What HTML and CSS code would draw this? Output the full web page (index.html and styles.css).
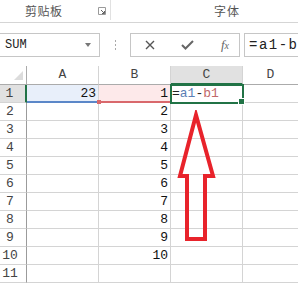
FILE: index.html
```html
<!DOCTYPE html>
<html lang="zh-CN">
<head>
    <meta charset="UTF-8">
    <title>Excel</title>
    <link rel="stylesheet" href="styles.css">
</head>
<body>
    <div class="ribbon">
        <div class="group clip">
            <span class="label">剪贴板</span>
            <svg class="launcher" width="8" height="8" viewBox="0 0 8 8">
                <path d="M0.5 0.5H7.5V7.5H0.5Z" fill="none" stroke="#9a9a9a"/>
                <path d="M3 3L6.5 6.5M6.5 4V6.5H4" fill="none" stroke="#666"/>
            </svg>
        </div>
        <div class="group font"><span class="label">字体</span></div>
    </div>

    <div class="formula-bar">
        <div class="name-box">
            <span>SUM</span>
            <span class="caret"></span>
        </div>
        <div class="dots"><i></i><i></i><i></i></div>
        <div class="buttons">
            <svg width="10" height="10" viewBox="0 0 10 10">
                <path d="M1 1L9 9M9 1L1 9" stroke="#555" stroke-width="1.4"/>
            </svg>
            <svg width="13" height="10" viewBox="0 0 13 10">
                <path d="M1 5L4.5 8.5L12 1" fill="none" stroke="#666" stroke-width="2"/>
            </svg>
            <span class="fx">f<sub>x</sub></span>
        </div>
        <div class="input">=a1-b1</div>
    </div>

    <div class="sheet">
        <div class="corner"><span></span></div>
        <div class="col">A</div>
        <div class="col">B</div>
        <div class="col active">C</div>
        <div class="col">D</div>

        <div class="row active">1</div>
        <div class="cell ref-a">23</div>
        <div class="cell ref-b">1</div>
        <div class="cell sel"><span class="dark">=</span><span class="blue">a1</span><span class="dark">-</span><span class="red">b1</span></div>
        <div class="cell"></div>

        <div class="row">2</div><div class="cell"></div><div class="cell">2</div><div class="cell"></div><div class="cell"></div>
        <div class="row">3</div><div class="cell"></div><div class="cell">3</div><div class="cell"></div><div class="cell"></div>
        <div class="row">4</div><div class="cell"></div><div class="cell">4</div><div class="cell"></div><div class="cell"></div>
        <div class="row">5</div><div class="cell"></div><div class="cell">5</div><div class="cell"></div><div class="cell"></div>
        <div class="row">6</div><div class="cell"></div><div class="cell">6</div><div class="cell"></div><div class="cell"></div>
        <div class="row">7</div><div class="cell"></div><div class="cell">7</div><div class="cell"></div><div class="cell"></div>
        <div class="row">8</div><div class="cell"></div><div class="cell">8</div><div class="cell"></div><div class="cell"></div>
        <div class="row">9</div><div class="cell"></div><div class="cell">9</div><div class="cell"></div><div class="cell"></div>
        <div class="row">10</div><div class="cell"></div><div class="cell">10</div><div class="cell"></div><div class="cell"></div>
        <div class="row">11</div><div class="cell"></div><div class="cell"></div><div class="cell"></div><div class="cell"></div>
    </div>

    <svg class="arrow" width="45" height="135" viewBox="0 0 45 135">
        <path d="M21 5L38 66H30V129H12V66H5Z" fill="none" stroke="#e8232b" stroke-width="4" stroke-linejoin="miter"/>
    </svg>
</body>
</html>
```

FILE: styles.css
```css
body {
    margin: 0;
    width: 298px;
    height: 284px;
    overflow: hidden;
    position: relative;
    background-color: #fff;
    font-family: "Liberation Mono", monospace;
    color: #333;
}

/* ribbon group labels */
.ribbon {
    display: flex;
    height: 22px;
    border-bottom: 1px solid #d5d5d5;
    font-family: "Noto Sans CJK SC", sans-serif;
    font-size: 12px;
    color: #555;
}

.group {
    display: flex;
    align-items: center;
    height: 20px;
}

.clip {
    width: 110px;
    border-right: 1px solid #e1e1e1;
}

.clip .label {
    margin-left: 25px;
    letter-spacing: 0.5px;
}

.launcher {
    margin-left: 35px;
    margin-top: 2px;
}

.font .label {
    margin-left: 103px;
    letter-spacing: 1px;
}

/* formula bar */
.formula-bar {
    display: flex;
    align-items: center;
    height: 43px;
}

.name-box {
    box-sizing: border-box;
    width: 100px;
    height: 24px;
    border: 1px solid #c6c6c6;
    border-left: none;
    display: flex;
    align-items: center;
    justify-content: space-between;
    padding: 0 8px 0 5px;
    font-size: 12px;
    color: #222;
}

.caret {
    width: 0;
    height: 0;
    border-left: 3px solid transparent;
    border-right: 3px solid transparent;
    border-top: 4px solid #777;
}

.dots {
    width: 30px;
    display: flex;
    flex-direction: column;
    align-items: center;
    gap: 2px;
}

.dots i {
    width: 1px;
    height: 2px;
    background-color: #aaa;
}

.buttons {
    box-sizing: border-box;
    width: 110px;
    height: 24px;
    border: 1px solid #c6c6c6;
    display: flex;
    align-items: center;
    justify-content: space-between;
    padding: 0 10px 0 14px;
}

.fx {
    font-family: "Liberation Serif", serif;
    font-style: italic;
    font-size: 13px;
    color: #666;
}

.fx sub {
    font-size: 10px;
    vertical-align: 0;
}

.input {
    box-sizing: border-box;
    height: 24px;
    margin-left: 4px;
    flex: 1;
    border: 1px solid #c6c6c6;
    border-right: none;
    padding-left: 4px;
    font-size: 14px;
    letter-spacing: 1.5px;
    line-height: 22px;
    color: #222;
    white-space: nowrap;
    overflow: hidden;
}

/* grid */
.sheet {
    display: grid;
    grid-template-columns: 27px 72px 72px 72px 55px;
    grid-template-rows: 19px;
    grid-auto-rows: 18px;
    font-size: 13px;
    line-height: 17px;
}

.sheet > div {
    box-sizing: border-box;
    border-right: 1px solid #d4d4d4;
    border-bottom: 1px solid #d4d4d4;
}

.sheet > div:nth-child(5n) {
    border-right: none;
}

.corner {
    display: flex;
    justify-content: flex-end;
    align-items: flex-end;
    padding: 0 3px 4px 0;
    border-right-color: #ababab !important;
    border-bottom-color: #ababab !important;
}

.corner span {
    width: 0;
    height: 0;
    border-left: 9px solid transparent;
    border-bottom: 9px solid #dcdcdc;
}

.col {
    text-align: center;
    color: #444;
    line-height: 18px;
    border-bottom-color: #ababab !important;
}

.col.active {
    background-color: #e1e1e1;
    border-bottom: 2px solid #217346 !important;
}

.row {
    text-align: center;
    padding-right: 6px;
    color: #444;
    border-right-color: #9b9b9b !important;
}

.row.active {
    background-color: #e1e1e1;
    border-right: 2px solid #217346 !important;
}

.cell {
    text-align: right;
    padding-right: 2px;
    color: #111;
}

.ref-a {
    background-color: #e8effa;
    border-bottom: 2px solid #5b87c8 !important;
}

.ref-b {
    background-color: #fde9ea;
    border-bottom: 2px solid #d9686c !important;
    position: relative;
}

.ref-b::before {
    content: "";
    position: absolute;
    left: -2px;
    bottom: -3px;
    width: 4px;
    height: 4px;
    background-color: #d9686c;
}

.sel {
    text-align: left;
    padding-left: 1px;
    outline: 2px solid #217346;
    outline-offset: -1px;
    position: relative;
}

.sel::after {
    content: "";
    position: absolute;
    right: -3px;
    bottom: -3px;
    width: 5px;
    height: 5px;
    background-color: #217346;
    border: 1px solid #fff;
}

.dark {
    color: #222;
}

.blue {
    color: #5b7fb5;
}

.red {
    color: #c0686a;
}

.arrow {
    position: absolute;
    left: 175px;
    top: 110px;
}
```
